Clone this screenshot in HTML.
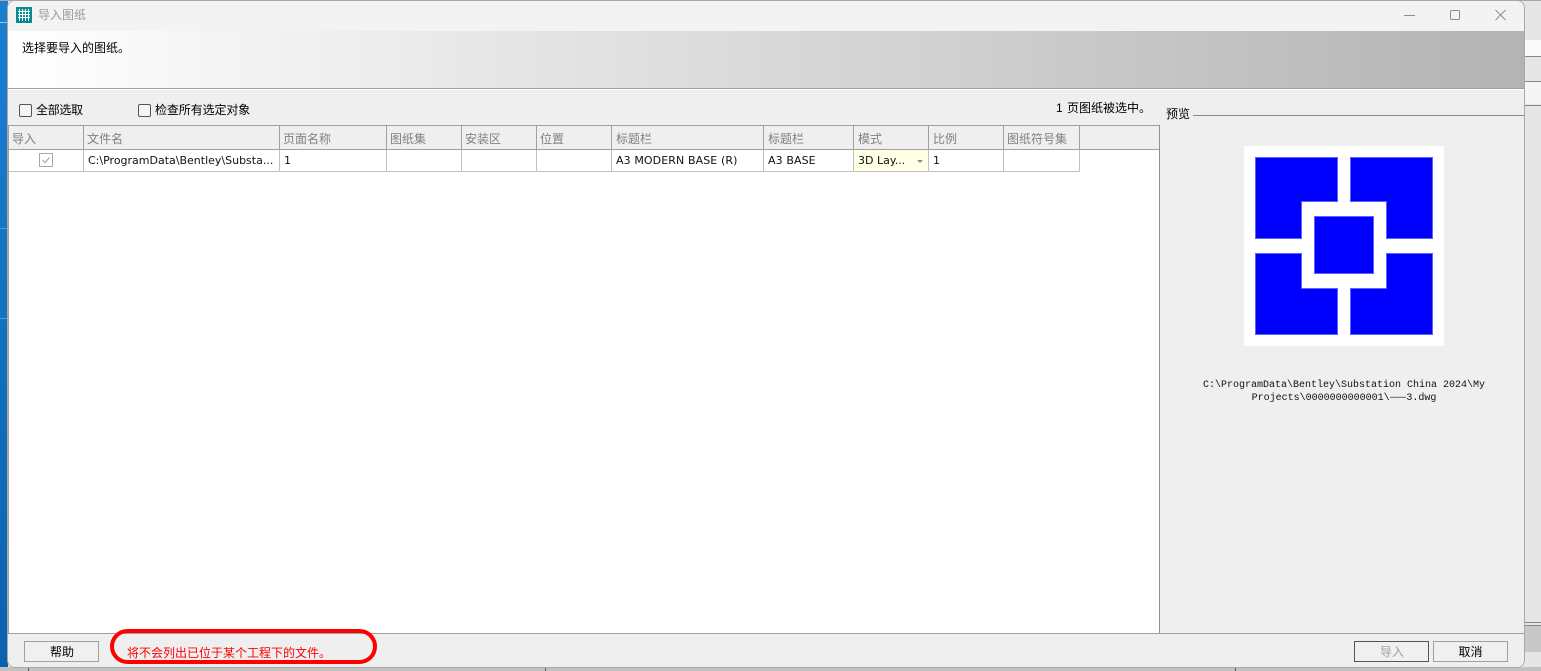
<!DOCTYPE html>
<html><head><meta charset="utf-8">
<style>
html,body{margin:0;padding:0;width:1541px;height:671px;overflow:hidden;background:#e6e6e6;font-family:"Liberation Sans","WenQuanYi Zen Hei","Noto Sans CJK SC",sans-serif;font-size:12px;color:#000}
.a{position:absolute}
.t{position:absolute;white-space:nowrap;line-height:14px}
.h{color:#808080}
.v{position:absolute;width:1px;background:#a0a0a0;top:126px;height:23px}
.w{position:absolute;width:1px;background:#c0c0c0;top:150px;height:21px}
.l{font-family:"DejaVu Sans","WenQuanYi Zen Hei",sans-serif;font-size:11px;color:#111}
.cb{position:absolute;width:11px;height:11px;border:1px solid #555;border-radius:2px;background:#f5f5f5}
.p{position:absolute;left:1166px;width:356px;height:14px;overflow:hidden;text-align:center;font-family:'Liberation Mono',monospace;font-size:10px;line-height:14px;color:#111;white-space:nowrap}
</style></head><body>
<div class="a" style="left:0;top:0;width:8px;height:671px;background:linear-gradient(#1a7fd0,#0a62ae)"></div>
<div class="a" style="left:0;top:22px;width:8px;height:1px;background:#9cc3e0"></div>
<div class="a" style="left:0;top:228px;width:8px;height:1px;background:#5a9bd0"></div>
<div class="a" style="left:0;top:318px;width:8px;height:1px;background:#5a9bd0"></div>
<div class="a" style="left:0;top:0;width:1541px;height:1px;background:#a8a8a8"></div>
<div class="a" style="left:1525px;top:40px;width:16px;height:16px;background:#fafafa"></div>
<div class="a" style="left:1525px;top:56px;width:16px;height:1px;background:#888"></div>
<div class="a" style="left:1525px;top:81px;width:16px;height:1px;background:#888"></div>
<div class="a" style="left:1525px;top:82px;width:16px;height:22px;background:#f5f5f5"></div>
<div class="a" style="left:1525px;top:105px;width:16px;height:1px;background:#888"></div>
<div class="a" style="left:1525px;top:622px;width:16px;height:1px;background:#888"></div>
<div class="a" style="left:1525px;top:625px;width:16px;height:1px;background:#888"></div>
<div class="a" style="left:1525px;top:626px;width:16px;height:26px;background:#c8c8c8"></div>
<div class="a" style="left:0;top:667px;width:1541px;height:4px;background:#c2c2c2"></div>
<div class="a" style="left:28px;top:667px;width:1px;height:4px;background:#555"></div>
<div class="a" style="left:545px;top:667px;width:1px;height:4px;background:#555"></div>
<div class="a" style="left:1235px;top:667px;width:1px;height:4px;background:#555"></div>

<!-- window -->
<div class="a" style="left:8px;top:1px;width:1516px;height:666px;background:#f0f0f0;border-radius:7px;overflow:hidden;box-shadow:0 0 0 1px #a8a8a8">
  <div class="a" style="left:0;top:0;width:1516px;height:30px;background:#f3f3f3"></div>
  <div class="a" style="left:0;top:30px;width:1516px;height:57px;background:linear-gradient(90deg,#ffffff 0%,#b3b3b3 100%)"></div>
  <div class="a" style="left:0;top:87px;width:1516px;height:1px;background:#a0a0a0"></div>
  <div class="a" style="left:0;top:88px;width:1516px;height:1px;background:#fff"></div>
  <div class="a" style="left:0;top:89px;width:1516px;height:577px;background:#efefef"></div>
</div>

<!-- title icon -->
<svg class="a" style="left:16px;top:7px" width="16" height="16" viewBox="0 0 16 16">
<rect width="16" height="16" fill="#0b8a94"/>
<path d="M3.5 2v12M6.5 2v12M9.5 2v12M12.5 2v12M2 4.5h12M2 7.5h12M2 10.5h12" stroke="#fff" stroke-width="1" fill="none"/>
</svg>
<div class="t" style="left:38px;top:8px;color:#9a9a9a">导入图纸</div>

<!-- window buttons -->
<svg class="a" style="left:1400px;top:5px" width="115" height="20" viewBox="0 0 115 20" fill="none" stroke="#8c8c8c">
<path d="M4 10.5h11"/>
<rect x="50.5" y="5.5" width="9" height="9" rx="1" />
<path d="M95.5 5l10 10M105.5 5l-10 10"/>
</svg>

<div class="t" style="left:22px;top:41px">选择要导入的图纸。</div>

<div class="cb" style="left:19px;top:104px"></div>
<div class="t" style="left:36px;top:103px;letter-spacing:-.3px">全部选取</div>
<div class="cb" style="left:138px;top:104px"></div>
<div class="t" style="left:155px;top:103px;letter-spacing:-.1px">检查所有选定对象</div>
<div class="t" style="left:1056px;top:101px">1</div>
<div class="t" style="left:1067px;top:101px">页图纸被选中。</div>

<!-- table -->
<div class="a" style="left:8px;top:125px;width:1152px;height:509px;background:#fff"></div>
<div class="a" style="left:8px;top:126px;width:1151px;height:23px;background:#efefef"></div>
<div class="a" style="left:8px;top:125px;width:1152px;height:1px;background:#a0a0a0"></div>
<div class="a" style="left:8px;top:149px;width:1152px;height:1px;background:#a0a0a0"></div>
<div class="a" style="left:8px;top:171px;width:1072px;height:1px;background:#c0c0c0"></div>
<div class="a" style="left:8px;top:125px;width:1px;height:508px;background:#a0a0a0"></div>
<div class="a" style="left:1159px;top:125px;width:1px;height:508px;background:#909090"></div>
<div class="v" style="left:83px"></div><div class="v" style="left:279px"></div><div class="v" style="left:386px"></div><div class="v" style="left:461px"></div><div class="v" style="left:536px"></div><div class="v" style="left:611px"></div><div class="v" style="left:763px"></div><div class="v" style="left:853px"></div><div class="v" style="left:928px"></div><div class="v" style="left:1003px"></div><div class="v" style="left:1079px"></div>
<div class="w" style="left:83px"></div><div class="w" style="left:279px"></div><div class="w" style="left:386px"></div><div class="w" style="left:461px"></div><div class="w" style="left:536px"></div><div class="w" style="left:611px"></div><div class="w" style="left:763px"></div><div class="w" style="left:853px"></div><div class="w" style="left:928px"></div><div class="w" style="left:1003px"></div><div class="w" style="left:1079px"></div>

<div class="t h" style="left:12px;top:132px">导入</div>
<div class="t h" style="left:87px;top:132px">文件名</div>
<div class="t h" style="left:283px;top:132px">页面名称</div>
<div class="t h" style="left:390px;top:132px">图纸集</div>
<div class="t h" style="left:465px;top:132px">安装区</div>
<div class="t h" style="left:540px;top:132px">位置</div>
<div class="t h" style="left:616px;top:132px">标题栏</div>
<div class="t h" style="left:768px;top:132px">标题栏</div>
<div class="t h" style="left:858px;top:132px">模式</div>
<div class="t h" style="left:933px;top:132px">比例</div>
<div class="t h" style="left:1007px;top:132px">图纸符号集</div>

<svg class="a" style="left:39px;top:153px" width="14" height="14" viewBox="0 0 14 14" fill="none">
<rect x=".5" y=".5" width="13" height="13" stroke="#a8a8a8"/>
<path d="M3.5 7l2.5 2.5 4.5-5" stroke="#a0a0a0"/>
</svg>
<div class="t l" style="left:88px;top:154px">C:\ProgramData\Bentley\Substa...</div>
<div class="t l" style="left:284px;top:154px">1</div>
<div class="t l" style="left:616px;top:154px;letter-spacing:.1px">A3 MODERN BASE (R)</div>
<div class="t l" style="left:768px;top:154px;letter-spacing:.1px">A3 BASE</div>
<div class="a" style="left:854px;top:150px;width:74px;height:21px;background:#ffffe6"></div>
<div class="t l" style="left:858px;top:154px">3D Lay...</div>
<div class="a" style="left:917px;top:160px;width:0;height:0;border-left:3px solid transparent;border-right:3px solid transparent;border-top:3px solid #888"></div>
<div class="t l" style="left:933px;top:154px">1</div>

<!-- preview -->
<div class="t" style="left:1166px;top:107px">预览</div>
<div class="a" style="left:1193px;top:115px;width:331px;height:1px;background:#888"></div>
<svg class="a" style="left:1244px;top:146px" width="200" height="200" viewBox="0 0 200 200">
<rect width="200" height="200" fill="#fff"/>
<g fill="#0000ff" stroke="#6060ff" stroke-width="1">
<path d="M11.5 11.5H93.5V55.5H57.5V92.5H11.5Z"/>
<path d="M106.5 11.5H188.5V92.5H142.5V55.5H106.5Z"/>
<path d="M11.5 107.5H57.5V142.5H93.5V188.5H11.5Z"/>
<path d="M142.5 107.5H188.5V188.5H106.5V142.5H142.5Z"/>
<rect x="70.5" y="70.5" width="59" height="57"/>
</g>
</svg>
<div class="p" style="top:379px">C:\ProgramData\Bentley\Substation China 2024\My</div>
<div class="p" style="top:392px">Projects\0000000000001\<span style="font-family:'Noto Sans CJK SC',sans-serif;line-height:0">——</span>3.dwg</div>

<!-- footer -->
<div class="a" style="left:8px;top:633px;width:1516px;height:1px;background:#a0a0a0"></div>
<div class="a" style="left:24px;top:641px;width:72px;height:19px;padding-left:1px;border:1px solid #a0a0a0;background:#f0f0f0;text-align:center;line-height:20px">帮助</div>
<div class="t" style="left:127px;top:646px;color:#f00">将不会列出已位于某个工程下的文件。</div>
<div class="a" style="left:110px;top:629px;width:259px;height:27px;border:4px solid #f00;border-radius:18px"></div>
<div class="a" style="left:1354px;top:641px;width:72px;height:19px;padding-left:1px;border:1px solid #555;background:#f0f0f0;text-align:center;line-height:20px;color:#a0a0a0">导入</div>
<div class="a" style="left:1433px;top:641px;width:73px;height:19px;border:1px solid #a0a0a0;background:#f0f0f0;text-align:center;line-height:20px">取消</div>
</body></html>
